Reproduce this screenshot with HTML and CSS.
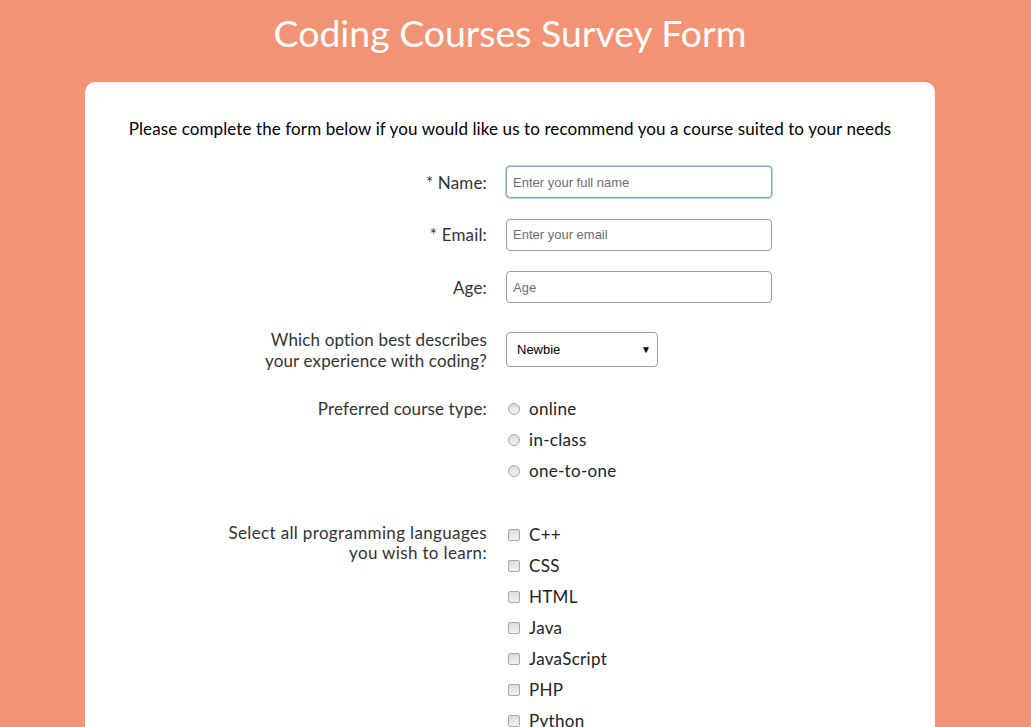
FILE: index.html
```html
<!DOCTYPE html>
<html lang="en">
<head>
<meta charset="utf-8">
<title>Coding Courses Survey Form</title>
<link rel="stylesheet" href="styles.css">
</head>
<body>
<div class="page">
  <h1 class="title">Coding Courses Survey Form</h1>
  <main class="card">
    <p class="intro">Please complete the form below if you would like us to recommend you a course suited to your needs</p>
    <form class="form">
      <div class="row row-text">
        <label class="label" for="name"><span class="req">*</span> Name:</label>
        <input class="field focused" id="name" type="text" placeholder="Enter your full name">
      </div>
      <div class="row row-text">
        <label class="label" for="email"><span class="req">*</span> Email:</label>
        <input class="field" id="email" type="email" placeholder="Enter your email">
      </div>
      <div class="row row-text">
        <label class="label" for="age">Age:</label>
        <input class="field" id="age" type="number" placeholder="Age">
      </div>
      <div class="row row-select">
        <label class="label" for="exp">Which option best describes<br>your experience with coding?</label>
        <div class="select" id="exp">
          <span>Newbie</span>
          <span class="caret">&#9660;</span>
        </div>
      </div>
      <div class="row row-radio">
        <div class="label">Preferred course type:</div>
        <div class="options">
          <label class="option"><span class="radio"></span>online</label>
          <label class="option"><span class="radio"></span>in-class</label>
          <label class="option"><span class="radio"></span>one-to-one</label>
        </div>
      </div>
      <div class="row row-check">
        <div class="label label-wide">Select all programming languages<br>you wish to learn:</div>
        <div class="options">
          <label class="option"><span class="check"></span>C++</label>
          <label class="option"><span class="check"></span>CSS</label>
          <label class="option"><span class="check"></span>HTML</label>
          <label class="option"><span class="check"></span>Java</label>
          <label class="option"><span class="check"></span>JavaScript</label>
          <label class="option"><span class="check"></span>PHP</label>
          <label class="option"><span class="check"></span>Python</label>
          <label class="option"><span class="check"></span>Ruby</label>
        </div>
      </div>
    </form>
  </main>
</div>
</body>
</html>
```
FILE: styles.css
```css
* { box-sizing: border-box; }
html, body {
  margin: 0;
  padding: 0;
  background: #f29374;
}
body {
  font-family: Lato, "Noto Sans", sans-serif;
  color: #333;
}
.page {
  width: 1020px;
}
.title {
  margin: 0;
  padding-top: 10px;
  height: 82px;
  text-align: center;
  color: #fff;
  font-family: Lato, sans-serif;
  font-weight: 400;
  font-size: 37.4px;
  line-height: 46px;
}
.card {
  width: 850px;
  margin: 0 auto;
  background: #fff;
  border-radius: 10px 10px 0 0;
  padding: 37px 0 40px;
  min-height: 700px;
}
.intro {
  margin: 0;
  text-align: center;
  color: #000;
  font-size: 17px;
  letter-spacing: 0.1px;
  line-height: 20px;
}
.form {
  margin-top: 27px;
}
.row {
  display: grid;
  grid-template-columns: 402px 1fr;
  column-gap: 19px;
}
.label {
  text-align: right;
  font-size: 17px;
  letter-spacing: 0.15px;
  line-height: 21px;
  color: #333;
}
.row-text {
  height: 32px;
  align-items: center;
  margin-bottom: 20.5px;
}
.req { color: #333; }
.field {
  width: 266px;
  height: 32px;
  border: 1px solid #9e9e9e;
  border-radius: 4px;
  padding: 0 6px;
  font-family: "Liberation Sans", Arial, sans-serif;
  font-size: 13px;
  color: #333;
  background: #fff;
  outline: none;
}
.field::placeholder { color: #6e6e6e; }
.field.focused {
  border-color: #7aa3d8;
  box-shadow: 0 0 0 1px #b9cdea;
}
.row-select {
  margin-top: 26px;
  margin-bottom: 22px;
}
.select {
  margin-top: 3px;
  width: 152px;
  height: 35px;
  border: 1px solid #9e9e9e;
  border-radius: 4px;
  display: flex;
  align-items: center;
  justify-content: space-between;
  padding: 0 6px 0 10px;
  font-family: "Liberation Sans", Arial, sans-serif;
  font-size: 13px;
  color: #000;
}
.caret {
  font-size: 10px;
  color: #000;
}
.row-radio {
  margin-bottom: 33px;
}
.row-radio .label {
  padding-top: 5px;
}
.row-check .label {
  line-height: 20px;
  padding-top: 4px;
}
.label-wide {
  letter-spacing: 0.35px;
}
.options {
  display: flex;
  flex-direction: column;
}
.option {
  display: flex;
  align-items: center;
  height: 31px;
  font-size: 17px;
  letter-spacing: 0.3px;
  color: #222;
}
.radio {
  width: 12px;
  height: 12px;
  border-radius: 50%;
  border: 1px solid #a8a8a8;
  background: linear-gradient(#dcdcdc, #f2f2f2);
  margin: 0 9px 0 2px;
}
.check {
  width: 12px;
  height: 12px;
  border-radius: 2px;
  border: 1px solid #a8a8a8;
  background: linear-gradient(#dcdcdc, #f2f2f2);
  margin: 0 9px 0 2px;
}
```
